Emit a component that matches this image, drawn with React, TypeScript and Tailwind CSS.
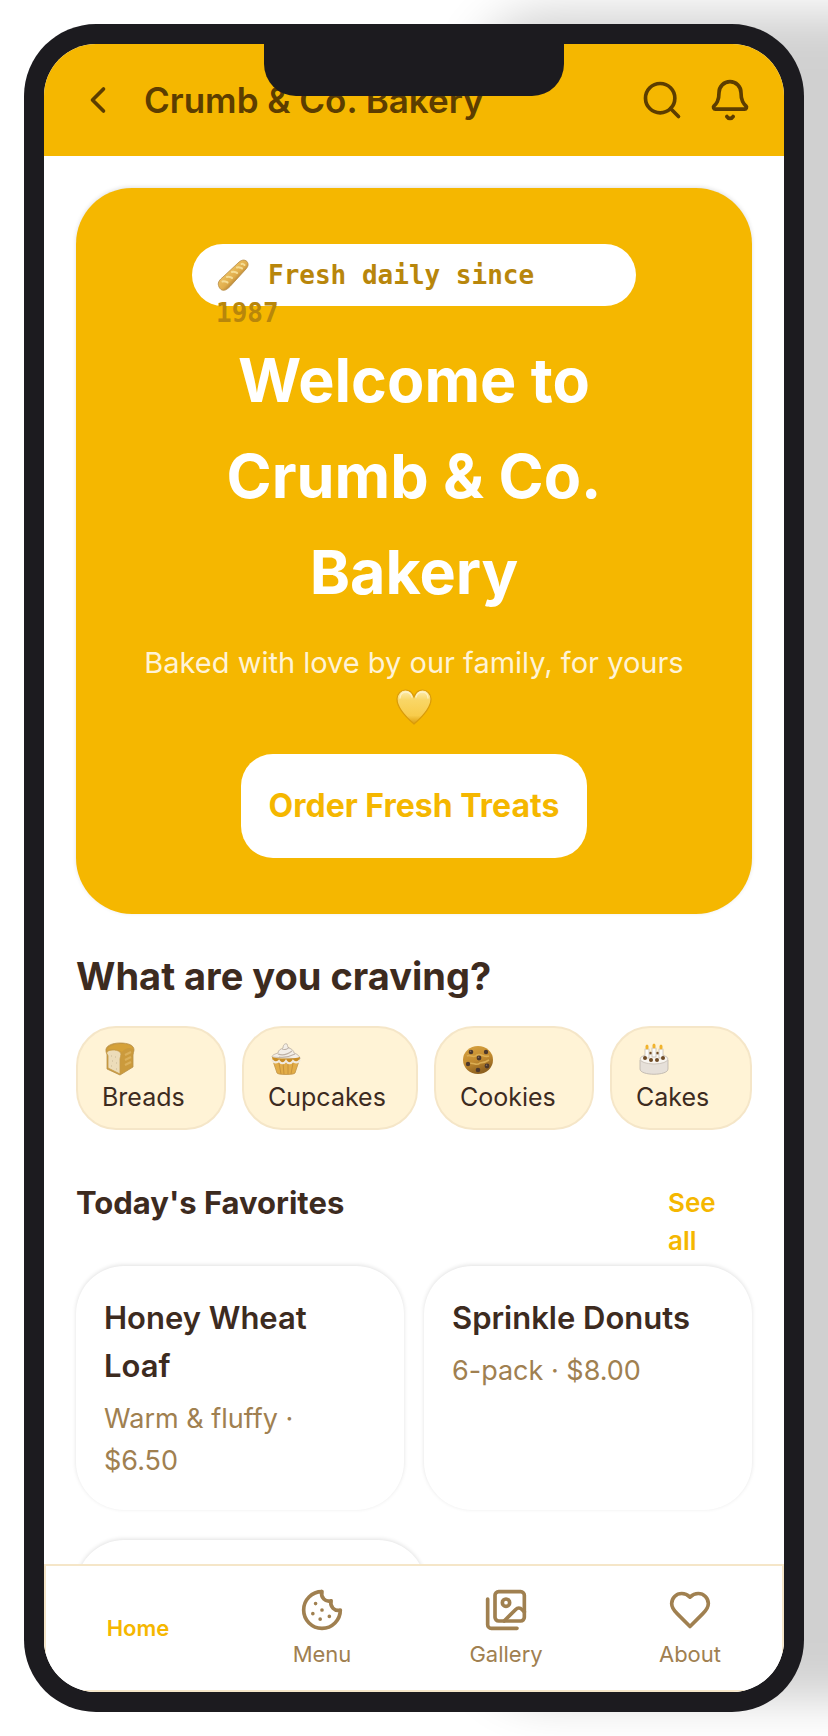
import type { ReactNode } from "react";
import { Bell, ChevronLeft, Search } from "lucide-react";

function Baguette() {
  return (
    <svg viewBox="0 0 34 34" className="h-[34px] w-[34px] shrink-0" aria-hidden="true">
      <defs>
        <linearGradient id="baguette" x1="0.3" y1="0.3" x2="0.7" y2="0.7">
          <stop offset="0" stopColor="#eec263" />
          <stop offset="0.6" stopColor="#e0ad4c" />
          <stop offset="1" stopColor="#a8742c" />
        </linearGradient>
      </defs>
      <path d="M2.500 27.500C1.500 24 4 21.500 7 19L22 5c3-3 6-4 9-1.500 2 3 1 5-1 7.500L14 28.500c-3 3-6 5-9 3-1-1-2-2-2.500-4Z" fill="url(#baguette)" stroke="#b58a44" strokeWidth="0.8" />
      <path d="M6.500 23.500c2-1 3 0 5 1M11 19c2-1 3 0 5 1M16 14c2-1 3 0 5 1M21 9.500c2-1 3 0 5 1M25.500 6c1-1 2 0 3 1" fill="none" stroke="#f5dc94" strokeWidth="2" strokeLinecap="round" />
    </svg>
  );
}

function YellowHeart() {
  return (
    <svg viewBox="0 0 36 36" className="inline-block h-9 w-9 align-middle" role="img" aria-label="yellow heart">
      <defs>
        <linearGradient id="heart" x1="0" y1="0" x2="0" y2="1">
          <stop offset="0" stopColor="#fdeeb4" />
          <stop offset="0.3" stopColor="#f9d666" />
          <stop offset="0.75" stopColor="#f8cc4c" />
          <stop offset="1" stopColor="#dc9c0a" />
        </linearGradient>
      </defs>
      <path d="M18 35C11 29 1 20 1 10 1 5 5 1 9.500 1 13.500 1 16.500 4 18 8c1.500-4 4.500-7 8.500-7C31 1 35 5 35 10c0 10-10 19-17 25Z" fill="url(#heart)" stroke="#d99a08" strokeWidth="1.2" />
      <path d="M4 9c0-4 3-6 6-6 3 0 5 2 6 5M20 8c1-3 3-5 6-5s6 2 6 6" fill="none" stroke="#fff6d6" strokeWidth="1.4" strokeLinecap="round" opacity="0.7" />
    </svg>
  );
}

function BreadIcon() {
  return (
    <svg viewBox="0 0 32 34" className="h-[34px] w-8" aria-hidden="true">
      <path d="M2 9C1 4 8 1 16 1c8 0 14 2 14 7 0 2-1 3-1 5v12L16 33 3 27V13C3 11 2 11 2 9Z" fill="#cb9a3c" stroke="#b88f48" strokeWidth="0.8" />
      <path d="M3 10c2-3 13-3 14 2 0 2-1 3-1 5v15L4 26V14c0-2-2-2-1-4Z" fill="#ecdcb9" stroke="#c79a45" strokeWidth="0.8" />
      <path d="M3 8c2-5 10-6 15-6 6 0 11 2 11 5-3-2-8-1-11 3C14 7 7 6 3 8Z" fill="#d5a139" />
      <path d="M21 13l6-3M21 18l6-3M21 23l6-3" stroke="#dbb05b" strokeWidth="2" />
      <path d="M7 14h1M11 15h1M8 19h1M12 21h1M7 24h1M12 27h1" stroke="#d3c4a2" strokeWidth="1.4" />
    </svg>
  );
}

function CupcakeIcon() {
  return (
    <svg viewBox="0 0 32 34" className="h-[34px] w-8" aria-hidden="true">
      <path d="M3 19h26l-4 12c-1 2-17 2-18 0Z" fill="#e2ad48" stroke="#c2944a" strokeWidth="0.8" />
      <path d="M9 21l2 11M13 21l1 11M18 21v11M23 21l-2 11" stroke="#c8923a" strokeWidth="1" />
      <path d="M2 15c0-2 3-3 6-4 0-3 3-4 5-5 0-3 2-5 4-4 1 2 0 3 2 4 3 1 5 3 5 5 3 1 6 3 6 6Z" fill="#f3eee7" stroke="#b9ada0" strokeWidth="0.8" />
      <path d="M8 12c5 2 10 0 14-3M12 7c3 1 6 0 7-2M9 15c6 1 12-1 16-3" fill="none" stroke="#bdb1a6" strokeWidth="1.1" />
      <path d="M2 15c6 2 22 2 28 0l-1 5H3Z" fill="#c98d25" />
      <path d="M2 18c2 3 5 3 7 1 2 3 5 3 7 0 2 3 5 3 7 0 2 2 5 2 7-1" fill="none" stroke="#f1eadf" strokeWidth="2.2" />
    </svg>
  );
}

function CookieEmoji() {
  return (
    <svg viewBox="0 0 32 34" className="h-[34px] w-8" aria-hidden="true">
      <defs>
        <linearGradient id="biscuit" x1="0" y1="0" x2="0.4" y2="1">
          <stop offset="0" stopColor="#d9a441" />
          <stop offset="0.6" stopColor="#c28a2f" />
          <stop offset="1" stopColor="#8f611f" />
        </linearGradient>
      </defs>
      <ellipse cx="16" cy="18" rx="15" ry="14" fill="url(#biscuit)" />
      <path d="M5 14c4-2 6 3 10-1 4-2 7 3 12 1M6 22c5-3 8 3 12-1 4 0 6-1 9-3" fill="none" stroke="#dbad53" strokeWidth="1.6" />
      <g fill="#4c382c">
        <circle cx="9" cy="10" r="2.3" />
        <circle cx="24" cy="10" r="2.2" />
        <circle cx="17" cy="16" r="2.4" />
        <circle cx="6" cy="22" r="2.2" />
        <circle cx="25" cy="24" r="2.4" />
        <circle cx="16" cy="28" r="2.3" />
      </g>
      <g fill="#8a7261">
        <circle cx="8.500" cy="9.300" r="0.8" />
        <circle cx="16.500" cy="15.300" r="0.8" />
        <circle cx="24.500" cy="23.300" r="0.8" />
      </g>
    </svg>
  );
}

function CakeIcon() {
  return (
    <svg viewBox="0 0 32 34" className="h-[34px] w-8" aria-hidden="true">
      <path d="M2 18v9c0 7 28 7 28 0v-9Z" fill="#e6e0d9" stroke="#b9b1a8" strokeWidth="0.8" />
      <ellipse cx="16" cy="17" rx="14" ry="5" fill="#f8f5f0" stroke="#c4bbb1" strokeWidth="0.8" />
      <g fill="#fbfaf7" stroke="#b5aaa0" strokeWidth="0.6">
        <rect x="7" y="7" width="4" height="9" />
        <rect x="14" y="6" width="4" height="9" />
        <rect x="21" y="7" width="4" height="9" />
      </g>
      <g fill="#f1b32d">
        <ellipse cx="9" cy="5" rx="1.600" ry="2.600" />
        <ellipse cx="16" cy="4" rx="1.600" ry="2.600" />
        <ellipse cx="23" cy="5" rx="1.600" ry="2.600" />
      </g>
      <g fill="#704b25">
        <circle cx="7" cy="16" r="2" />
        <circle cx="13" cy="18" r="2" />
        <circle cx="19" cy="18" r="2" />
        <circle cx="25" cy="16" r="2" />
        <circle cx="12.500" cy="11" r="1.200" />
        <circle cx="19.500" cy="11" r="1.200" />
      </g>
    </svg>
  );
}

function NavGlyph({ children }: { children: ReactNode }) {
  return (
    <svg viewBox="0 0 24 24" className="h-11 w-11" fill="none" stroke="currentColor" strokeWidth="2" strokeLinecap="round" strokeLinejoin="round" aria-hidden="true">
      {children}
    </svg>
  );
}

const categories = [
  { label: "Breads", icon: <BreadIcon /> },
  { label: "Cupcakes", icon: <CupcakeIcon /> },
  { label: "Cookies", icon: <CookieEmoji /> },
  { label: "Cakes", icon: <CakeIcon /> },
];

const favorites = [
  { name: "Honey Wheat Loaf", detail: "Warm & fluffy · $6.50" },
  { name: "Sprinkle Donuts", detail: "6-pack · $8.00" },
];

const links = [
  {
    label: "Menu",
    icon: (
      <NavGlyph>
        <path d="M12 2a10 10 0 1 0 10 10 4 4 0 0 1-5-5 4 4 0 0 1-5-5" />
        <path d="M8.500 8.500v.01M16 15.500v.01M12 12v.01M11 17v.01M7 14v.01" />
      </NavGlyph>
    ),
  },
  {
    label: "Gallery",
    icon: (
      <NavGlyph>
        <path d="M18 22H4a2 2 0 0 1-2-2V6" />
        <path d="m22 13-1.296-1.296a2.410 2.410 0 0 0-3.408 0L11 18" />
        <circle cx="12" cy="8" r="2" />
        <rect width="16" height="16" x="6" y="2" rx="2" />
      </NavGlyph>
    ),
  },
  {
    label: "About",
    icon: (
      <NavGlyph>
        <path d="M19 14c1.490-1.460 3-3.210 3-5.500A5.500 5.500 0 0 0 16.500 3c-1.760 0-3 .5-4.500 2-1.500-1.500-2.740-2-4.500-2A5.500 5.500 0 0 0 2 8.500c0 2.300 1.500 4.050 3 5.500l7 7Z" />
      </NavGlyph>
    ),
  },
];

const cardStyle = "rounded-[48px] bg-white p-7 shadow-[0_-1px_4px_rgba(0,0,0,0.12)]";

export default function App() {
  return (
    <div className="flex h-screen overflow-hidden bg-white p-6 font-['Inter','Liberation_Sans',sans-serif] text-[#3d2b1f]">
      <div className="relative flex min-w-0 flex-1 rounded-[72px] bg-[#1c1b1f] p-5 shadow-[450px_-12px_48px_rgba(0,0,0,0.185)]">
        <div className="absolute top-5 left-1/2 z-10 h-[52px] w-[300px] -translate-x-1/2 rounded-b-[32px] bg-[#1c1b1f]" />
        <div className="flex min-w-0 flex-1 flex-col overflow-hidden rounded-[52px] bg-white">
          <header className="flex h-28 shrink-0 items-center gap-6 bg-[#f5b700] px-8 text-[#5c3d00]">
            <button type="button" aria-label="Back">
              <ChevronLeft size={44} />
            </button>
            <span className="flex-1 text-[35px] leading-[44px] font-semibold whitespace-nowrap">Crumb &amp; Co. Bakery</span>
            <button type="button" aria-label="Search">
              <Search size={44} />
            </button>
            <button type="button" aria-label="Notifications">
              <Bell size={44} />
            </button>
          </header>

          <main className="min-h-0 flex-1 overflow-hidden px-8 pt-8">
            <section className="flex flex-col items-center rounded-[56px] bg-[#f5b700] p-14 text-center shadow-[0_-1px_4px_rgba(0,0,0,0.12)]">
              <div className="h-[62px] w-full max-w-[444px] rounded-full bg-white px-6 py-3 text-left font-['DejaVu_Sans_Mono',monospace] text-[26px] leading-[38px] font-bold whitespace-nowrap text-[#b8860b]">
                <span className="flex items-center gap-[18px]">
                  <Baguette />
                  Fresh daily since
                </span>
                <span className="block">1987</span>
              </div>
              <h1 className="mt-[26px] max-w-[400px] text-[61px] leading-[96px] font-bold text-white">Welcome to Crumb &amp; Co. Bakery</h1>
              <p className="mt-[22px] text-[29px] leading-[42px] text-[#fff3d6]">
                Baked with love by our family, for yours
                <br />
                <YellowHeart />
              </p>
              <button type="button" className="mt-7 h-[104px] rounded-[32px] bg-white px-7 text-[32px] leading-[48px] font-bold text-[#f5b700]">
                Order Fresh Treats
              </button>
            </section>

            <h2 className="mt-8 text-[38px] leading-[60px] font-bold">What are you craving?</h2>
            <div className="mt-5 grid grid-cols-[150fr_176fr_160fr_142fr] gap-4">
              {categories.map((c) => (
                <button key={c.label} type="button" className="flex h-[104px] flex-col justify-center rounded-[40px] border-2 border-[#f5e6c8] bg-[#fff3d6] pl-6 text-left text-[25px] leading-[38px]">
                  <span className="flex h-[38px] items-center pl-0.5">{c.icon}</span>
                  <span>{c.label}</span>
                </button>
              ))}
            </div>

            <div className="mt-[54px] flex items-start justify-between">
              <h2 className="text-[31px] leading-[38px] font-bold">Today&apos;s Favorites</h2>
              <a href="#favorites" className="w-[84px] pr-5 text-[26px] leading-[38px] font-semibold text-[#f5b700]">
                See all
              </a>
            </div>
            <div id="favorites" className="mt-1.5 grid grid-cols-2 gap-5">
              {favorites.map((f) => (
                <article key={f.name} className={cardStyle}>
                  <h3 className="text-[31px] leading-[48px] font-semibold">{f.name}</h3>
                  <p className="mt-2 pr-6 text-[27px] leading-[42px] text-[#a08050]">{f.detail}</p>
                </article>
              ))}
            </div>
            <div className="mt-[30px] flex">
              <article className={`h-60 w-[350px] ${cardStyle}`} />
            </div>
          </main>

          <nav className="grid h-32 shrink-0 grid-cols-4 border-2 border-[#f5e6c8] bg-white text-[22px] leading-[28px] text-[#a08050]">
            <a href="#home" className="flex items-center justify-center font-semibold text-[#f5b700]">
              Home
            </a>
            {links.map((l) => (
              <a key={l.label} href={`#${l.label.toLowerCase()}`} className="flex flex-col items-center justify-center gap-2">
                {l.icon}
                {l.label}
              </a>
            ))}
          </nav>
        </div>
      </div>
    </div>
  );
}
